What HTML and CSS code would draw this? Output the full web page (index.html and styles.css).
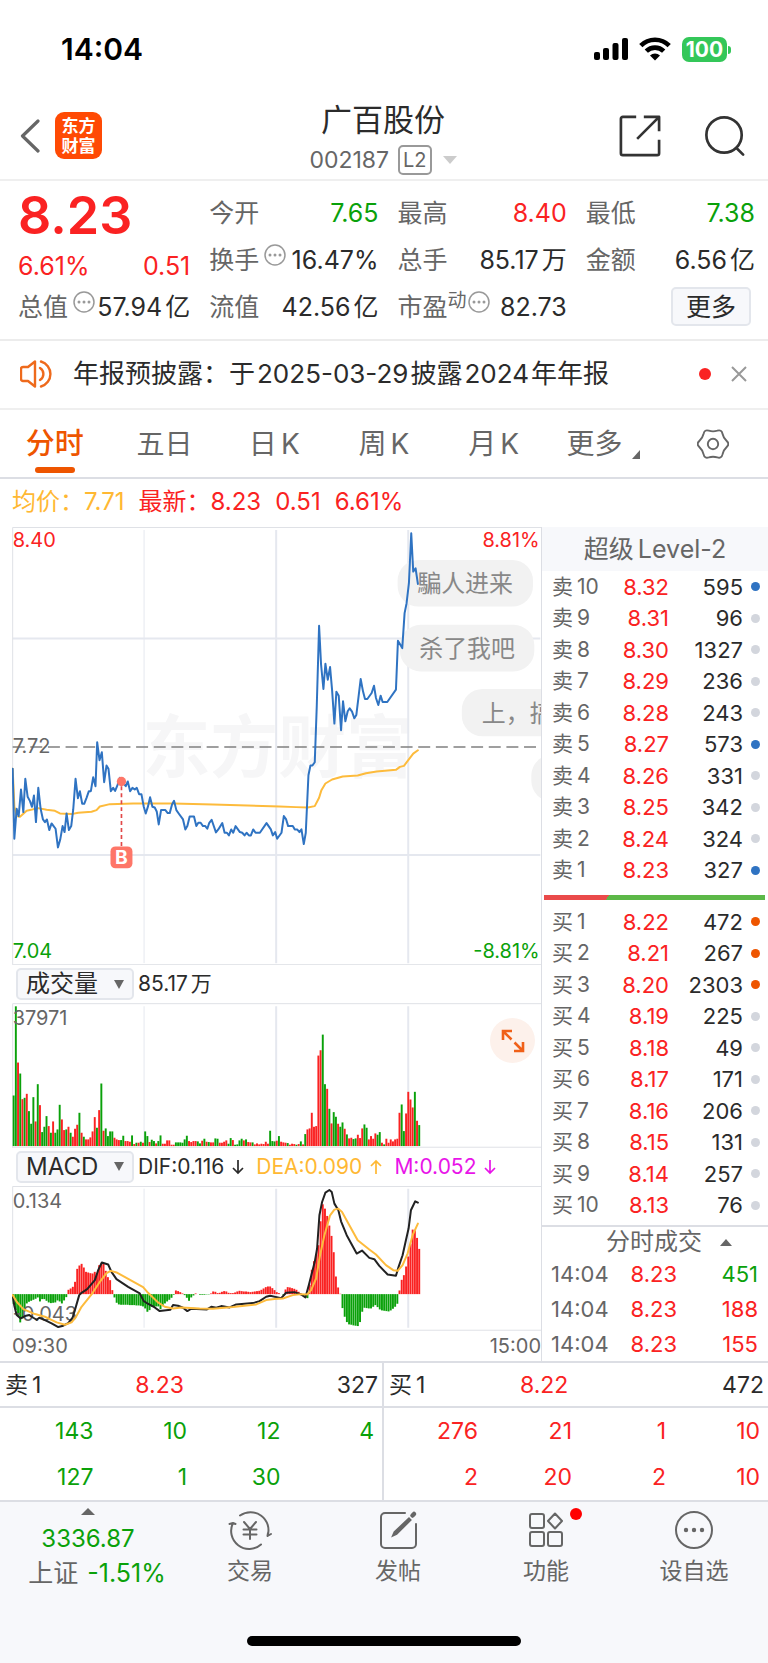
FILE: index.html
```html
<!DOCTYPE html>
<html lang="zh-CN">
<head>
<meta charset="utf-8">
<meta name="viewport" content="width=device-width, initial-scale=1">
<title>广百股份 002187</title>
<link rel="stylesheet" href="styles.css">
</head>
<body>
<div class="status-bar">
  <span class="clock">14:04</span>
  <div class="status-icons">
    <svg width="34" height="24" viewBox="0 0 34 24" aria-label="信号"><rect x="0" y="15" width="6" height="8" rx="2"/><rect x="9" y="11" width="6" height="12" rx="2"/><rect x="18.500" y="6" width="6" height="17" rx="2"/><rect x="28" y="1" width="6" height="22" rx="2"/></svg>
    <svg width="32" height="24" viewBox="0 0 32 24" aria-label="无线网络"><g fill="none" stroke="#000" stroke-width="4.600"><path d="M1.800 8.600a20 20 0 0 1 28.400 0"/><path d="M7.300 14.200a12.300 12.300 0 0 1 17.400 0"/></g><path d="M11 18.400a7.200 7.200 0 0 1 10 0L16 23.600z"/></svg>
    <span class="battery">100</span>
  </div>
</div>

<header class="title-bar">
  <div class="title-left">
    <button class="icon-button" aria-label="返回"><svg width="20" height="34" viewBox="0 0 20 34" fill="none" stroke="#666" stroke-width="3.200" stroke-linecap="round" stroke-linejoin="round"><path d="M18 2 2.500 17 18 32"/></svg></button>
    <div class="app-logo"><span>东方</span><span>财富</span></div>
  </div>
  <div class="title-center">
    <h1>广百股份</h1>
    <div class="code-line"><span>002187</span><span class="level-tag">L2</span><svg width="14" height="8" viewBox="0 0 14 8"><path d="M0 0h14L7 8z" fill="#ccc"/></svg></div>
  </div>
  <div class="title-right">
    <button class="icon-button" aria-label="分享"><svg width="42" height="42" viewBox="0 0 44 44" fill="none" stroke="#333" stroke-width="2.800" stroke-linejoin="round"><path d="M18 2H4a2 2 0 0 0-2 2v36a2 2 0 0 0 2 2h36a2 2 0 0 0 2-2V26M26 2h16v15M42 2 19 25"/></svg></button>
    <button class="icon-button" aria-label="搜索"><svg width="42" height="42" viewBox="0 0 42 44" fill="none" stroke="#333" stroke-width="2.800" stroke-linecap="round"><circle cx="20" cy="21" r="18.500"/><path d="m33 34.500 7 7"/></svg></button>
  </div>
</header>

<section class="quote">
  <div class="quote-col lead">
    <div class="last-price">8.23</div>
    <div class="pair red"><span>6.61%</span><span>0.51</span></div>
    <div class="pair"><span class="label">总值<svg class="more-dot" width="22" height="22" viewBox="0 0 22 22"><use href="#dots"/></svg></span><span>57.94<i>亿</i></span></div>
  </div>
  <div class="quote-col">
    <div class="pair"><span class="label">今开</span><span class="green">7.65</span></div>
    <div class="pair"><span class="label">换手<svg class="more-dot" width="22" height="22" viewBox="0 0 22 22"><use href="#dots"/></svg></span><span>16.47%</span></div>
    <div class="pair"><span class="label">流值</span><span>42.56<i>亿</i></span></div>
  </div>
  <div class="quote-col">
    <div class="pair"><span class="label">最高</span><span class="red">8.40</span></div>
    <div class="pair"><span class="label">总手</span><span>85.17<i>万</i></span></div>
    <div class="pair"><span class="label">市盈<small>动</small><svg class="more-dot tight" width="22" height="22" viewBox="0 0 22 22"><use href="#dots"/></svg></span><span>82.73</span></div>
  </div>
  <div class="quote-col">
    <div class="pair"><span class="label">最低</span><span class="green">7.38</span></div>
    <div class="pair"><span class="label">金额</span><span>6.56<i>亿</i></span></div>
    <div class="pair end"><button class="more-button">更多</button></div>
  </div>
</section>

<section class="notice">
  <svg width="33" height="28" viewBox="0 0 33 28" fill="none" stroke="#ee6a1c" stroke-width="2.400" stroke-linecap="round" stroke-linejoin="round"><path d="M15 1.500v25L8 21H3a2 2 0 0 1-2-2V9a2 2 0 0 1 2-2h5zM20 8a7 7 0 0 1 0 12M21 1.500a13 13 0 0 1 0 25"/></svg>
  <p>年报预披露：于<i>2025-03-29</i><i>披露</i><i>2024</i><i>年年报</i></p>
  <span class="notice-dot"></span>
  <button class="icon-button" aria-label="关闭"><svg width="16" height="16" viewBox="0 0 16 16" stroke="#999" stroke-width="2"><path d="m1 1 14 14M15 1 1 15"/></svg></button>
</section>

<nav class="period-tabs">
  <button class="active">分时</button>
  <button>五日</button>
  <button>日<i>K</i></button>
  <button>周<i>K</i></button>
  <button>月<i>K</i></button>
  <button class="with-corner">更多<svg width="8" height="9" viewBox="0 0 8 9"><path d="M8 0v9H0z" fill="#666"/></svg></button>
  <button aria-label="设置"><svg width="32" height="32" viewBox="0 0 32 32" fill="none" stroke="#666" stroke-width="1.900"><path d="M29.700 13Q33 16 29.700 19Q26.400 22 25.500 26.400Q24.500 30.700 20.300 29.400Q16 28 11.800 29.400Q7.500 30.700 6.600 26.400Q5.600 22 2.300 19Q-1 16 2.300 13Q5.600 10 6.600 5.700Q7.500 1.300 11.800 2.700Q16 4 20.300 2.700Q24.500 1.300 25.500 5.700Q26.400 10 29.700 13z"/><circle cx="16" cy="16" r="5.200"/></svg></button>
</nav>

<div class="averages"><span class="amber">均价：</span><span class="amber value">7.71</span><span class="red name">最新：</span><span class="red value">8.23</span><span class="red value">0.51</span><span class="red value">6.61%</span></div>

<main class="board">
  <section class="charts">
    <svg class="plot" viewBox="36 21 1590 1317" role="img" aria-label="分时走势">
      <text class="watermark" x="428" y="758">东方财富</text>
      <g class="grid-lines">
        <path class="fine" d="M433 30V1332"/><path d="M830 30V1332M1227 30V1332M38 356H1624M38 1007H1624"/>
        <path class="frame" d="M38 1337V22.500H1626M38 1336.500H1626"/>
      </g>
      <g class="bubbles">
        <rect x="1195" y="120" width="407" height="140" rx="62"/>
        <rect x="1202" y="315" width="404" height="140" rx="62"/>
        <rect x="1388" y="508" width="500" height="142" rx="62"/>
        <rect x="1597" y="706" width="400" height="140" rx="62"/>
        <text x="1254" y="216">騙人进来</text><text x="1260" y="411">杀了我吧</text><text x="1448" y="606">上，搞</text>
      </g>
      <path d="M38 682H1620" fill="none" stroke="#808080" stroke-width="4.500" stroke-dasharray="36 17"/>
      <text class="axis" x="38" y="81" fill="#fa2222">8.40</text>
      <text class="axis" x="38" y="699" fill="#666">7.72</text>
      <text class="axis" x="38" y="1317" fill="#0aa10a">7.04</text>
      <text class="axis end" x="1622" y="81" fill="#fa2222">8.81%</text>
      <text class="axis end" x="1622" y="1317" fill="#0aa10a">-8.81%</text>
      <polyline class="line amber-line" points="38,748 43,860 50,890 60,892 80,874 115,866 140,871 165,874 180,882 215,884 235,880 275,877 290,872 300,861 330,854 400,852 520,852 640,855 840,861 890,863 925,864 946,860 959,835 966,812 978,792 998,780 1030,771 1075,768 1100,761 1132,756 1190,751 1202,742 1214,739 1227,722 1242,702 1256,692"/>
      <polyline class="line price-line" points="38,748 43,958 50,868 56,890 63,810 70,878 76,778 83,832 90,845 96,862 102,828 108,908 115,805 122,868 129,900 135,908 141,900 148,932 155,912 161,920 167,928 174,984 181,960 188,920 194,938 200,882 207,932 214,920 220,870 227,778 234,836 240,815 247,853 253,853 260,835 267,815 273,815 280,773 287,800 292,668 299,722 306,698 313,788 320,738 326,748 333,815 340,805 346,814 353,797 360,775 366,786 378,800 384,786 391,815 398,805 405,810 411,805 418,824 425,824 432,862 438,882 445,860 451,833 458,862 465,864 471,876 477,915 484,872 497,872 504,881 510,881 517,855 523,844 530,872 537,882 550,900 557,930 563,920 570,891 583,891 590,920 596,910 603,910 610,920 617,920 623,928 629,910 636,901 649,939 656,930 668,911 675,940 682,940 688,948 695,930 701,940 708,920 721,938 728,940 735,948 741,940 748,948 754,948 761,930 768,940 781,940 801,911 814,930 820,948 827,938 833,958 846,940 853,890 860,900 866,920 880,920 886,930 893,930 900,938 906,930 913,974 919,940 927,767 933,738 939,738 946,728 952,560 959,318 965,435 972,508 978,432 985,480 992,442 998,510 1005,612 1011,516 1018,528 1025,632 1031,545 1038,605 1045,575 1051,566 1058,576 1065,596 1071,586 1078,528 1084,478 1091,515 1097,538 1104,538 1117,520 1124,498 1130,535 1137,556 1144,528 1150,547 1164,547 1190,510 1196,363 1209,385 1216,280 1222,250 1229,190 1236,40 1242,155 1249,145 1256,192"/>
      <g class="buy-mark"><circle cx="365" cy="786" r="14"/><path d="M365 800V982"/><rect x="332" y="981" width="66" height="66" rx="15"/><text x="365" y="1035">B</text></g>
    </svg>

    <div class="indicator-bar">
      <label class="picker"><select aria-label="副图指标一"><option>成交量</option><option>MACD</option></select><svg width="10" height="9" viewBox="0 0 10 9"><path d="M0 0h10L5 9z" fill="#666"/></svg></label>
      <span>85.17<i>万</i></span>
    </div>
    <div class="plot-box">
      <svg class="plot" viewBox="36 132 1590 435" role="img" aria-label="成交量">
        <g class="grid-lines"><path class="fine" d="M433 142V562"/><path d="M830 142V562M1227 142V562"/><path class="frame" d="M38 566V134H1626M36 565.500H1626"/></g>
        <g id="volume"></g>
        <text class="axis" x="38" y="199" fill="#666">37971</text>
      </svg>
      <button class="expand" aria-label="全屏"><svg width="24" height="24" viewBox="0 0 24 24" fill="none" stroke="#f06018" stroke-width="2.600"><path d="M2 11V2h9M2 2l8.500 8.500M22 13v9h-9M22 22l-8.500-8.500"/></svg></button>
    </div>

    <div class="indicator-bar">
      <label class="picker"><select aria-label="副图指标二"><option>MACD</option><option>成交量</option></select><svg width="10" height="9" viewBox="0 0 10 9"><path d="M0 0h10L5 9z" fill="#666"/></svg></label>
      <span class="signal">DIF:0.116<svg width="12" height="16" viewBox="0 0 12 16"><use href="#arrow-down"/></svg></span>
      <span class="signal amber">DEA:0.090<svg width="12" height="16" viewBox="0 0 12 16"><use href="#arrow-up"/></svg></span>
      <span class="signal magenta">M:0.052<svg width="12" height="16" viewBox="0 0 12 16"><use href="#arrow-down"/></svg></span>
    </div>
    <svg class="plot" viewBox="36 682 1590 435" role="img" aria-label="MACD">
      <g class="grid-lines"><path class="fine" d="M433 690V1108"/><path d="M830 690V1108M1227 690V1108"/><path class="frame" d="M38 1116V683.500H1626M36 1115.500H1626"/></g>
      <g id="macd"></g>
      <text class="axis" x="38" y="747" fill="#666">0.134</text>
      <text class="axis" x="38" y="1089" fill="#666">-0.043</text>
      <polyline class="line dif-line" points="38,1012 43,1042 50,1070 62,1080 75,1073 88,1070 100,1078 110,1084 118,1078 135,1085 155,1095 175,1106 190,1102 205,1094 218,1078 225,1055 238,1010 245,1003 262,992 285,965 295,935 306,912 325,918 335,940 350,962 385,985 420,1005 432,1028 440,1033 465,1047 480,1058 512,1054 520,1040 535,1042 550,1048 563,1058 575,1051 622,1053 635,1045 650,1048 665,1043 690,1047 710,1038 760,1034 780,1028 800,1015 812,1012 845,1019 860,1003 885,1001 905,1008 918,1017 928,980 946,910 953,870 960,770 968,730 978,702 990,694 997,700 1005,735 1017,755 1025,788 1042,830 1072,885 1088,876 1110,898 1125,902 1140,922 1165,948 1190,952 1198,925 1210,890 1220,845 1228,810 1235,755 1248,728 1256,732"/>
      <polyline class="line amber-line" points="38,1010 50,1030 70,1052 105,1067 135,1075 170,1092 195,1099 215,1092 228,1076 245,1045 275,1008 300,970 320,944 333,937 350,942 430,986 445,1003 475,1032 495,1045 520,1050 545,1047 600,1050 640,1051 700,1046 770,1038 800,1025 825,1022 850,1020 880,1010 905,1007 923,1008 935,995 950,960 962,890 975,830 992,770 1005,753 1017,750 1028,760 1050,800 1075,845 1110,873 1130,888 1160,920 1182,935 1195,937 1210,920 1225,885 1240,830 1256,795"/>
    </svg>
    <div class="time-axis"><span>09:30</span><span>15:00</span></div>
  </section>

  <aside class="depth">
    <h2>超级<i>Level-2</i></h2>
    <table class="orders">
      <tr><th>卖<i>10</i></th><td>8.32</td><td>595</td><td><b class="dot blue"></b></td></tr>
      <tr><th>卖<i>9</i></th><td>8.31</td><td>96</td><td><b class="dot"></b></td></tr>
      <tr><th>卖<i>8</i></th><td>8.30</td><td>1327</td><td><b class="dot"></b></td></tr>
      <tr><th>卖<i>7</i></th><td>8.29</td><td>236</td><td><b class="dot"></b></td></tr>
      <tr><th>卖<i>6</i></th><td>8.28</td><td>243</td><td><b class="dot"></b></td></tr>
      <tr><th>卖<i>5</i></th><td>8.27</td><td>573</td><td><b class="dot blue"></b></td></tr>
      <tr><th>卖<i>4</i></th><td>8.26</td><td>331</td><td><b class="dot"></b></td></tr>
      <tr><th>卖<i>3</i></th><td>8.25</td><td>342</td><td><b class="dot"></b></td></tr>
      <tr><th>卖<i>2</i></th><td>8.24</td><td>324</td><td><b class="dot"></b></td></tr>
      <tr><th>卖<i>1</i></th><td>8.23</td><td>327</td><td><b class="dot blue"></b></td></tr>
    </table>
    <div class="balance"></div>
    <table class="orders">
      <tr><th>买<i>1</i></th><td>8.22</td><td>472</td><td><b class="dot orange"></b></td></tr>
      <tr><th>买<i>2</i></th><td>8.21</td><td>267</td><td><b class="dot orange"></b></td></tr>
      <tr><th>买<i>3</i></th><td>8.20</td><td>2303</td><td><b class="dot orange"></b></td></tr>
      <tr><th>买<i>4</i></th><td>8.19</td><td>225</td><td><b class="dot"></b></td></tr>
      <tr><th>买<i>5</i></th><td>8.18</td><td>49</td><td><b class="dot"></b></td></tr>
      <tr><th>买<i>6</i></th><td>8.17</td><td>171</td><td><b class="dot"></b></td></tr>
      <tr><th>买<i>7</i></th><td>8.16</td><td>206</td><td><b class="dot"></b></td></tr>
      <tr><th>买<i>8</i></th><td>8.15</td><td>131</td><td><b class="dot"></b></td></tr>
      <tr><th>买<i>9</i></th><td>8.14</td><td>257</td><td><b class="dot"></b></td></tr>
      <tr><th>买<i>10</i></th><td>8.13</td><td>76</td><td><b class="dot"></b></td></tr>
    </table>
    <button class="trades-title">分时成交<svg width="12" height="7" viewBox="0 0 12 7"><path d="M0 7h12L6 0z" fill="#666"/></svg></button>
    <table class="trades">
      <tr><th>14:04</th><td class="red">8.23</td><td class="green">451</td></tr>
      <tr><th>14:04</th><td class="red">8.23</td><td class="red">188</td></tr>
      <tr><th>14:04</th><td class="red">8.23</td><td class="red">155</td></tr>
    </table>
  </aside>
</main>

<section class="queues">
  <div class="queue">
    <div class="queue-head"><span>卖<i>1</i></span><span class="red">8.23</span><span>327</span></div>
    <div class="queue-grid green"><span>143</span><span>10</span><span>12</span><span>4</span><span>127</span><span>1</span><span>30</span></div>
  </div>
  <div class="queue">
    <div class="queue-head"><span>买<i>1</i></span><span class="red">8.22</span><span>472</span></div>
    <div class="queue-grid red"><span>276</span><span>21</span><span>1</span><span>10</span><span>2</span><span>20</span><span>2</span><span>10</span></div>
  </div>
</section>

<footer class="bottom-bar">
  <nav class="actions">
    <button class="index-button"><svg width="14" height="7" viewBox="0 0 14 7"><path d="M0 7h14L7 0z" fill="#666"/></svg><span class="green">3336.87</span><span class="index-name">上证<span class="green">-1.51%</span></span></button>
    <button><svg width="44" height="40" viewBox="0 0 44 40" fill="none" stroke="#666" stroke-width="2" stroke-linecap="round" stroke-linejoin="round"><path d="M12 5.500A18 18 0 0 1 39.500 26L43 24M39.500 26l.500-3M33 34.500A18 18 0 0 1 5 13L1.500 14M5 13l2.500 1"/><path d="m16 12 6 7 6-7M22 19v10M15.500 19.500h13M15.500 24.500h13"/></svg><span>交易</span></button>
    <button><svg width="40" height="40" viewBox="0 0 40 40" fill="none" stroke="#666" stroke-width="2" stroke-linecap="round"><path d="M27 3H7a4 4 0 0 0-4 4v27a4 4 0 0 0 4 4h27a4 4 0 0 0 4-4V14"/><path d="m31 8.500 1.500 1.500L18.500 24 15 25.500 16.500 22z" fill="#666"/><path d="m34.500 5.500 1.500-1.500" stroke-width="4.500"/></svg><span>发帖</span></button>
    <button class="badged"><svg width="36" height="40" viewBox="0 0 36 40" fill="none" stroke="#666" stroke-width="2" stroke-linejoin="round"><rect x="2" y="4" width="14" height="14" rx="2"/><rect x="2" y="22" width="14" height="14" rx="2"/><rect x="20" y="22" width="14" height="14" rx="2"/><path d="m27 3.500 7 7.500-7 7.500-7-7.500z"/></svg><span>功能</span></button>
    <button><svg width="40" height="40" viewBox="0 0 40 40"><circle cx="20" cy="20" r="18" fill="none" stroke="#666" stroke-width="2"/><g fill="#666"><circle cx="12" cy="20" r="2.200"/><circle cx="20" cy="20" r="2.200"/><circle cx="28" cy="20" r="2.200"/></g></svg><span>设自选</span></button>
  </nav>
  <div class="home-indicator"></div>
</footer>

<svg class="symbols" aria-hidden="true">
  <symbol id="dots" viewBox="0 0 22 22"><circle cx="11" cy="11" r="10" fill="none" stroke="#999" stroke-width="1.500"/><g fill="#999"><circle cx="6" cy="11" r="1.500"/><circle cx="11" cy="11" r="1.500"/><circle cx="16" cy="11" r="1.500"/></g></symbol>
  <symbol id="arrow-down" viewBox="0 0 12 16"><path d="M6 1v13M1 9l5 5 5-5" fill="none" stroke="currentColor" stroke-width="1.700"/></symbol>
  <symbol id="arrow-up" viewBox="0 0 12 16"><path d="M6 15V2M1 7l5-5 5 5" fill="none" stroke="currentColor" stroke-width="1.700"/></symbol>
</svg>
<script src="charts.js"></script>
</body>
</html>
```

FILE: styles.css
```css
* { box-sizing: border-box; }
body {
  margin: 0;
  min-height: 100vh;
  display: flex;
  flex-direction: column;
  background: #fff;
  color: #2b2b2b;
  font-family: Inter, "Noto Sans CJK SC", sans-serif;
  font-size: 24px;
  line-height: 32px;
}
button, select { font: inherit; color: inherit; background: none; border: 0; padding: 0; margin: 0; }
svg { display: block; flex: none; }
i { margin-left: 4px; font-style: normal; }
h1, h2, p { margin: 0; font-weight: 400; }
th { font-weight: 400; text-align: left; }
table { border-collapse: collapse; }
.symbols { position: absolute; width: 0; height: 0; }
.red { color: #fa2222; }
.green { color: #0aa10a; }
.amber { color: #ffb833; }
.magenta { color: #e815e8; }

.status-bar { display: flex; justify-content: space-between; align-items: center; height: 98px; padding: 0 41px 0 61px; }
.clock { font-size: 30px; font-weight: 600; color: #000; }
.status-icons { display: flex; align-items: center; gap: 11px; }
.battery { position: relative; width: 45px; height: 25px; border-radius: 7px; background: #34c759; color: #fff; font-size: 21px; font-weight: 700; line-height: 25px; text-align: center; }
.battery::after { content: ""; position: absolute; right: -4px; top: 9px; width: 3px; height: 8px; border-radius: 0 3px 3px 0; background: #34c759; }

.title-bar { display: grid; grid-template-columns: 1fr auto 1fr; align-items: center; height: 83px; padding: 0 22px 0 20px; border-bottom: 2px solid #efefef; }
.icon-button { display: flex; }
.title-left, .title-right { display: flex; align-items: center; padding-bottom: 6px; }
.title-left { gap: 15px; }
.title-right { justify-content: flex-end; gap: 43px; }
.app-logo { display: flex; flex-direction: column; align-items: center; justify-content: center; width: 47px; height: 47px; border-radius: 9px; background: #ff4a04; color: #fff; font-size: 17px; font-weight: 700; line-height: 20px; }
.title-center { display: flex; flex-direction: column; align-items: center; }
.title-center h1 { font-size: 31px; line-height: 42px; }
.code-line { display: flex; align-items: center; gap: 9px; height: 38px; color: #666; font-size: 23px; }
.level-tag { padding: 0 3px; border: 2px solid #999; border-radius: 5px; font-size: 20px; line-height: 26px; }
.code-line svg { margin-left: 2px; }

.quote { display: grid; grid-template-columns: 172fr 169fr 169fr 169fr; gap: 19px; padding: 8px 13px 9px 18px; border-bottom: 2px solid #ececec; font-size: 25px; }
.quote-col { display: grid; grid-template-rows: repeat(3, 47px); min-width: 0; }
.quote-col.lead { grid-template-rows: 60px 34px 47px; }
.last-price { font-size: 52px; line-height: 54px; font-weight: 600; color: #fa2222; }
.pair { display: flex; justify-content: space-between; align-items: center; white-space: nowrap; }
.pair.end { justify-content: flex-end; }
.quote i { margin-left: 3px; }
.label { display: flex; color: #666; }
.label small { font-size: 19px; line-height: 20px; }
.more-dot { margin-left: 5px; }
.more-dot.tight { margin-left: 1px; }
.more-button { width: 80px; height: 39px; margin-right: 4px; border: 2px solid #e3e6ec; border-radius: 5px; background: #f7f8fb; }

.notice { display: flex; align-items: center; height: 69px; padding: 0 21px 2px 20px; border-bottom: 2px solid #efefef; font-size: 26px; }
.notice p { flex: 1; margin-left: 20px; white-space: nowrap; }
.notice i { margin-left: 2px; }
.notice-dot { width: 12px; height: 12px; margin-right: 20px; border-radius: 50%; background: #fa2222; }

.period-tabs { display: grid; grid-template-columns: repeat(7, 1fr); height: 69px; border-bottom: 2px solid #dcdee4; color: #666; font-size: 28px; }
.period-tabs button { display: flex; align-items: center; justify-content: center; }
.period-tabs .active { position: relative; color: #ee5500; font-size: 29px; font-weight: 500; }
.period-tabs .active::after { content: ""; position: absolute; left: 50%; bottom: 4px; width: 40px; height: 6px; margin-left: -20px; border-radius: 3px; background: #ee5500; }
.with-corner svg { margin: 22px 0 0 10px; }

.averages { display: flex; align-items: center; height: 48px; padding: 0 12px 2px; font-size: 24px; }
.averages .value { margin-right: 14px; }

.board { display: grid; grid-template-columns: 542fr 226fr; border-bottom: 2px solid #dcdee4; }
.charts { padding-left: 12px; border-right: 1px solid #dcdee4; min-width: 0; }
.plot { width: 100%; height: auto; }
.plot-box { position: relative; }
.grid-lines path { fill: none; stroke: #e5e8ef; stroke-width: 6; }
.grid-lines .fine, .grid-lines .frame { stroke-width: 3; }
.grid-lines .frame { stroke: #dfe1e6; }
.watermark { font-size: 204px; font-weight: 700; fill: #f6f6f7; }
.bubbles { fill: #f2f2f2; }
.bubbles text { font-size: 72px; fill: #888; }
.axis { font-size: 60px; }
.axis.end { text-anchor: end; }
.line { fill: none; stroke-width: 6; stroke-linejoin: round; stroke-linecap: round; }
.amber-line { stroke: #fdbb3c; }
.price-line { stroke: #2f73c2; }
.dif-line { stroke: #222; }
.buy-mark { fill: #fe7668; }
.buy-mark path { stroke: #e24848; stroke-width: 5; stroke-dasharray: 12 9; }
.buy-mark text { fill: #fff; font-size: 58px; font-weight: 700; text-anchor: middle; }
.up { fill: #fa2222; }
.down { fill: #0aa10a; }
.indicator-bar { display: flex; align-items: center; height: 38px; font-size: 21px; }
.picker { display: flex; align-items: center; width: 118px; height: 32px; margin: 0 4px; border: 2px solid #e3e6ec; border-radius: 5px; background: #f7f8fb; font-size: 24px; }
.picker select { width: 96px; height: 28px; line-height: 28px; padding-left: 8px; appearance: none; }
.indicator-bar i { margin-left: 3px; }
.signal { display: flex; align-items: center; gap: 8px; margin-right: 12px; }
.expand { position: absolute; top: 15px; right: 6px; display: flex; align-items: center; justify-content: center; width: 45px; height: 45px; border-radius: 50%; background: #fdf1eb; }
.time-axis { display: flex; justify-content: space-between; height: 30px; font-size: 20px; line-height: 30px; color: #666; }

.depth { display: flex; flex-direction: column; }
.depth h2 { height: 44px; line-height: 44px; background: #f7f8fb; color: #666; font-size: 25px; text-align: center; }
.orders { width: 100%; height: 315px; font-size: 22px; line-height: 24px; text-align: right; }
.orders td, .orders th, .trades td, .trades th { padding: 0; }
.orders th { width: 58px; padding-left: 10px; color: #666; font-size: 21px; white-space: nowrap; }
.orders td:nth-child(2) { width: 69px; color: #fa2222; }
.orders td:last-child { width: 25px; }
.dot { display: block; width: 9px; height: 9px; margin-left: 8px; border-radius: 50%; background: #d3d6dd; }
.dot.blue { background: #2f73c2; }
.dot.orange { background: #ee5500; }
.balance { height: 5px; margin: 9px 3px 6px 2px; background: linear-gradient(120deg, #ea4a4a 29%, #5cb848 29%); }
.trades-title { display: flex; align-items: center; justify-content: center; gap: 18px; height: 32px; margin-top: 4px; padding-left: 28px; border-top: 2px solid #dcdee4; color: #666; font-size: 24px; }
.trades { width: 100%; height: 104px; font-size: 22px; line-height: 24px; text-align: right; }
.trades th { padding-left: 9px; color: #666; }
.trades td:nth-child(2) { width: 68px; }
.trades td:last-child { width: 91px; padding-right: 10px; }

.queues { display: grid; grid-template-columns: 1fr 1fr; border-bottom: 2px solid #dcdee4; font-size: 23px; }
.queue:first-child { border-right: 2px solid #dcdee4; }
.queue-head { display: grid; grid-template-columns: 1fr 1fr 1fr; align-items: center; height: 45px; padding: 0 4px 0 5px; border-bottom: 2px solid #dcdee4; }
.queue-head span:nth-child(2) { padding-left: 6px; }
.queue-head span:nth-child(3) { text-align: right; }
.queue-grid { display: grid; grid-template-columns: repeat(4, 1fr); grid-auto-rows: 46px; padding-right: 8px; line-height: 46px; text-align: right; }

.bottom-bar { flex: 1; display: flex; flex-direction: column; justify-content: space-between; background: #f7f8fb; color: #666; }
.actions { display: grid; grid-template-columns: 176fr repeat(4, 148fr); }
.actions button { display: flex; flex-direction: column; align-items: center; gap: 5px; padding-top: 8px; font-size: 23px; line-height: 32px; }
.actions .index-button { gap: 0; padding-top: 6px; font-size: 24px; line-height: 34px; }
.index-button svg { margin-bottom: 7px; }
.actions .index-name { display: flex; gap: 9px; padding-left: 18px; font-size: 25px; }
.actions button > span { white-space: nowrap; }
.badged { position: relative; }
.badged::after { content: ""; position: absolute; top: 6px; left: 98px; width: 12px; height: 12px; border-radius: 50%; background: #ff0000; }
.home-indicator { align-self: center; width: 274px; height: 10px; margin-bottom: 17px; border-radius: 5px; background: #000; }
```

FILE: charts.js
```js
// One bar per trading minute, positive values are drawn red and negative ones green.
var START = 38;
var STEP = 6.59;
var NS = "http://www.w3.org/2000/svg";

var volume = [
  -152, -420, 251, -218, 141, -145, 157, -105, -67, -147, 74, -186, 123, -42, -58, -90, 60, -40, 74, -40,
  -50, -124, 80, 48, -50, 58, -40, 28, 52, 64, -100, 40, -28, 20, 20, 26, 44, 87, -55, 108,
  -188, 46, -53, -30, -44, -44, 25, 20, 18, -18, -31, 15, 15, 13, -32, 6, -10, 10, -13, 10,
  -44, -30, 12, -19, -15, 8, -15, -32, 7, 7, 17, 17, 4, 4, -11, -11, -11, -10, -20, -31,
  15, 12, 15, 15, -14, -8, 16, -22, 13, -12, 11, 11, -23, -22, 10, 10, 13, 17, -7, -24,
  18, -4, -5, -17, -22, 17, -20, 12, 11, -11, 5, 8, 5, 7, 6, 13, 7, -46, -15, -14,
  16, -30, 13, 11, 10, -9, 4, 7, 6, -4, 6, -14, 5, -36, 50, 53, 100, 58, 60, 272,
  288, -335, -186, 172, -112, 68, -102, -88, 67, -58, -71, 52, -35, 23, 25, -21, -23, 34, 24, 53,
  -65, -55, 20, 30, 22, 38, -34, -42, 10, -5, 22, 10, 20, 14, 20, 22, 100, -125, -45, 98,
  163, 140, 116, -163, 76, -63
];

// x position and height of the MACD histogram, interpolated between entries
var macd = [
  [38, -30], [58, -86], [66, -70], [78, -26], [104, -14], [111, -10], [117, -22], [127, -12], [147, -28], [165, -25],
  [171, -18], [183, -28], [200, -4], [203, 15], [214, 18], [224, 40], [230, 82], [243, 92], [256, 66], [276, 62],
  [283, 68], [289, 60], [296, 92], [310, 92], [318, 56], [329, 40], [336, 5], [342, -12], [350, -31], [415, -34],
  [430, -38], [442, -56], [452, -38], [475, -37], [481, -48], [488, -32], [515, -9], [520, 0], [526, 12], [543, 4],
  [554, -4], [565, -20], [573, -8], [585, 2], [600, -2], [628, -1], [640, 10], [652, 2], [673, 10], [685, 3],
  [700, 3], [715, 10], [750, 6], [780, 11], [800, 23], [810, 23], [830, 5], [848, -3], [855, 14], [863, 22],
  [885, 15], [900, 3], [912, -9], [922, -12], [928, 30], [936, 85], [946, 115], [952, 130], [958, 180], [964, 270],
  [970, 270], [982, 230], [990, 192], [996, 163], [1002, 110], [1008, 38], [1015, 14], [1022, -5], [1028, -55], [1042, -90],
  [1075, -97], [1082, -75], [1088, -40], [1110, -44], [1126, -33], [1140, -48], [1166, -52], [1182, -42], [1195, -24], [1199, 25],
  [1207, 52], [1213, 60], [1220, 95], [1227, 125], [1238, 198], [1246, 190], [1252, 162], [1260, 122]
];

function addBar(group, x, base, value) {
  var height = Math.abs(value);
  if (height < 1) return;
  var bar = document.createElementNS(NS, "rect");
  bar.setAttribute("class", value > 0 ? "up" : "down");
  bar.setAttribute("x", x.toFixed(1));
  bar.setAttribute("y", value > 0 || base < 600 ? base - height : base);
  bar.setAttribute("width", 5.8);
  bar.setAttribute("height", height);
  group.appendChild(bar);
}

function heightAt(x) {
  for (var i = 1; i < macd.length; i++) {
    if (x <= macd[i][0]) {
      var a = macd[i - 1], b = macd[i];
      return Math.round(a[1] + (b[1] - a[1]) * (x - a[0]) / (b[0] - a[0]));
    }
  }
  return macd[macd.length - 1][1];
}

volume.forEach(function (value, i) {
  var x = START + i * STEP;
  addBar(document.getElementById("volume"), x, 562, value);
  addBar(document.getElementById("macd"), x, 1007, heightAt(x));
});
```
